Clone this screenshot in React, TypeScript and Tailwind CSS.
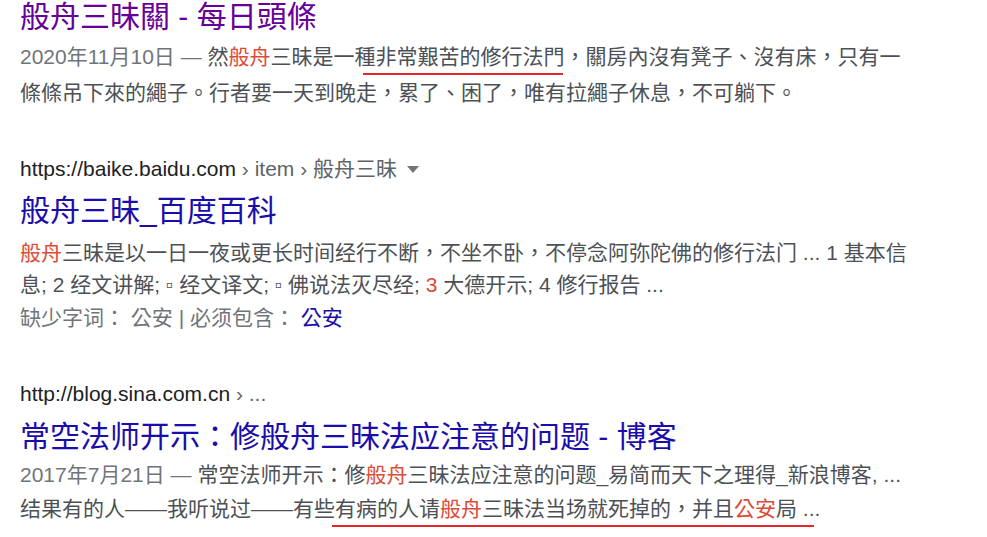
import type { ReactNode } from "react"

const font = "font-['Liberation_Sans','Noto_Sans_CJK_TC',sans-serif]"

function Em({ children }: { children: ReactNode }) {
  return <span className="text-[#dd4b39]">{children}</span>
}

// red hand-drawn style annotation line under a phrase
function Marked({ children, line }: { children: ReactNode; line: string }) {
  return (
    <span className="relative">
      {children}
      <span className={`absolute h-[2px] bg-[#e8262a] ${line}`} />
    </span>
  )
}

export default function App() {
  return (
    <div className={`${font} min-h-[537px] w-[987px] overflow-hidden bg-white pl-5 text-[21px] text-[#4d5156]`}>
      <section className="-mt-[3px]">
        <h3 className="text-[30px] leading-[40px] text-[#660099]">般舟三昧關 - 每日頭條</h3>
        <p className="mt-[2px] whitespace-nowrap leading-[36px]">
          <span className="text-[#70757a]">2020年11月10日 — </span>然<Em>般舟</Em>三昧是一種<Marked line="-left-[13px] right-[2px] -bottom-[7px]">非常艱苦的修行法門</Marked>，關房內沒有凳子、沒有床，只有一
          <br />
          條條吊下來的繩子。行者要一天到晚走，累了、困了，唯有拉繩子休息，不可躺下。
        </p>
      </section>

      <section className="mt-[41px]">
        <div className="flex items-center whitespace-nowrap leading-[33px]">
          <span className="text-[#202124]">https://baike.baidu.com</span>
          <span className="text-[#5f6368]">&nbsp;› item › 般舟三昧</span>
          <span className="ml-[10px] mt-[2px] h-0 w-0 border-x-[6px] border-t-[7px] border-x-transparent border-t-[#70757a]" />
        </div>
        <h3 className="mt-[6px] text-[30px] leading-[40px] text-[#1a0dab]">般舟三昧_百度百科</h3>
        <p className="mt-[6px] whitespace-nowrap leading-[32px]">
          <Em>般舟</Em>三昧是以一日一夜或更长时间经行不断，不坐不卧，不停念阿弥陀佛的修行法门 ... 1 基本信
          <br />
          息; 2 经文讲解; ▫ 经文译文; ▫ 佛说法灭尽经; <Em>3</Em> 大德开示; 4 修行报告 ...
        </p>
        <p className="mt-[1px] whitespace-nowrap leading-[32px] text-[#70757a]">
          缺少字词： 公安 | 必须包含： <span className="text-[#1a0dab]">公安</span>
        </p>
      </section>

      <section className="mt-[43px]">
        <div className="whitespace-nowrap leading-[33px]">
          <span className="text-[#202124]">http://blog.sina.com.cn</span>
          <span className="text-[#5f6368]"> › ...</span>
        </div>
        <h3 className="mt-[7px] text-[30px] leading-[40px] text-[#1a0dab]">常空法师开示：修般舟三昧法应注意的问题 - 博客</h3>
        <p className="mt-[1px] whitespace-nowrap leading-[34px]">
          <span className="text-[#70757a]">2017年7月21日 — </span>常空法师开示：修<Em>般舟</Em>三昧法应注意的问题_易简而天下之理得_新浪博客, ...
          <br />
          结果有的人——我听说过——有些<Marked line="-left-[3px] right-[6px] -bottom-[7px]">有病的人请<Em>般舟</Em>三昧法当场就死掉的，并且<Em>公安</Em>局 ...</Marked>
        </p>
      </section>
    </div>
  )
}
